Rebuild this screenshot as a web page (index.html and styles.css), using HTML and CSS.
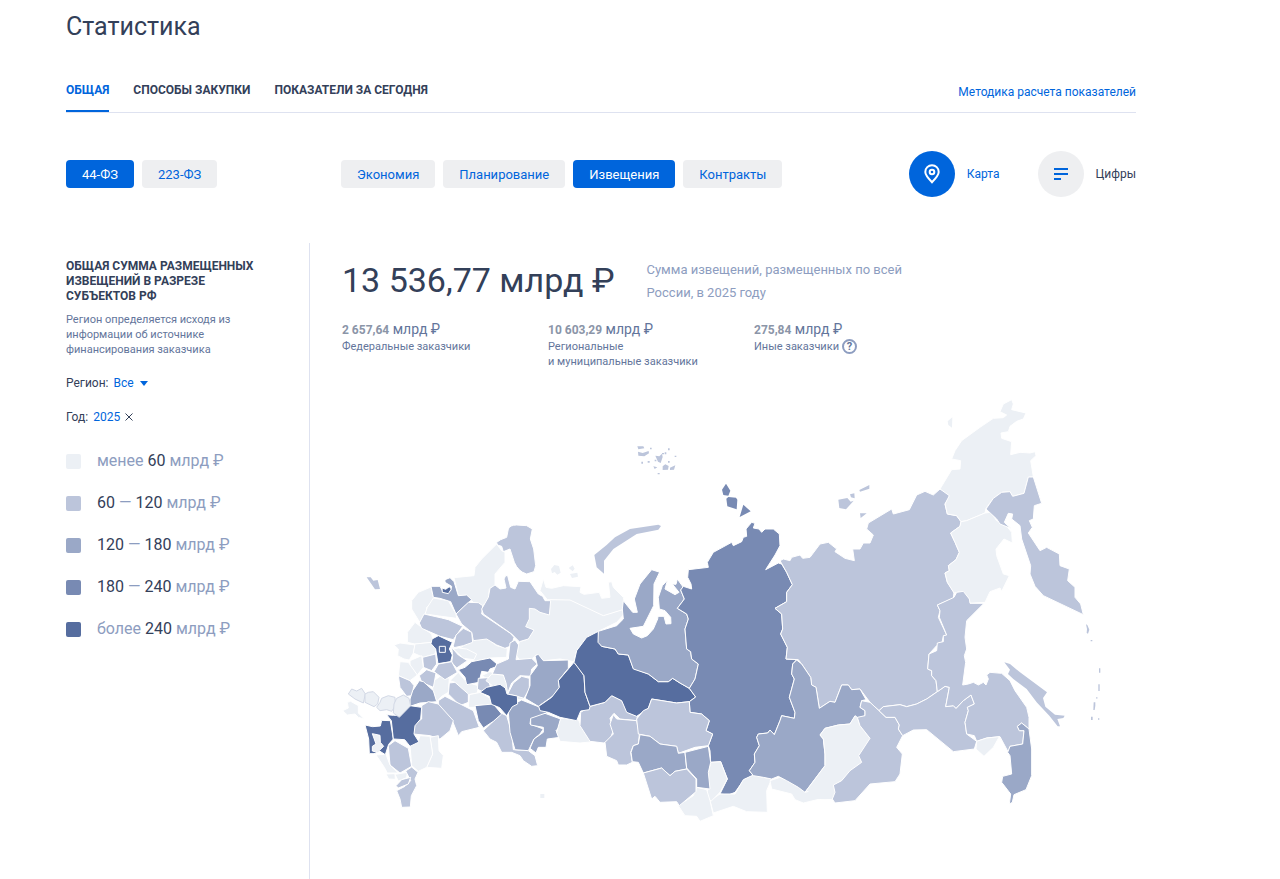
FILE: index.html
```html
<!DOCTYPE html>
<html lang="ru">
<head>
<meta charset="utf-8">
<title>Статистика</title>
<link rel="stylesheet" href="styles.css">
</head>
<body>
<main class="page">
  <h1 class="title">Статистика</h1>
  <div class="tabbar">
    <nav class="tabs">
      <a class="tab tab-active" href="#general">Общая</a>
      <a class="tab" href="#methods">Способы закупки</a>
      <a class="tab" href="#today">Показатели за сегодня</a>
    </nav>
    <a class="method" href="#method">Методика расчета показателей</a>
  </div>

  <div class="filters">
    <div class="pills laws">
      <button class="pill pill-active" type="button">44-ФЗ</button>
      <button class="pill" type="button">223-ФЗ</button>
    </div>
    <div class="pills">
      <button class="pill" type="button">Экономия</button>
      <button class="pill" type="button">Планирование</button>
      <button class="pill pill-active" type="button">Извещения</button>
      <button class="pill" type="button">Контракты</button>
    </div>
    <div class="views">
      <button class="view view-active" type="button">
        <span class="disc"><svg width="16" height="20" viewBox="0 0 16 20" fill="none" stroke="#fff" stroke-width="2"><path d="M8 18.2C4.2 14.2 1.3 11.200 1.300 7.900a6.700 6.700 0 0 1 13.400 0c0 3.300-2.900 6.300-6.700 10.300z"/><circle cx="8" cy="8" r="2.300"/></svg></span>
        Карта
      </button>
      <button class="view" type="button">
        <span class="disc"><svg width="14" height="12" viewBox="0 0 14 12" fill="none" stroke="#0065dc" stroke-width="2"><path d="M0 1h14M0 6h14M0 11h7"/></svg></span>
        Цифры
      </button>
    </div>
  </div>

  <div class="body">
    <aside class="side">
      <h2 class="side-title">Общая сумма размещенных извещений в разрезе субъектов РФ</h2>
      <p class="side-note">Регион определяется исходя из информации об источнике финансирования заказчика</p>
      <div class="field">
        <label for="region">Регион:</label>
        <select id="region" class="region"><option>Все</option></select>
        <svg width="8" height="5" viewBox="0 0 8 5"><path d="M0 0h8L4 5z" fill="#0065dc"/></svg>
      </div>
      <div class="field">
        <span>Год:</span>
        <a class="year" href="#year">2025</a>
        <button class="clear" type="button" aria-label="Сбросить год"><svg width="8" height="8" viewBox="0 0 8 8" stroke="#334059" fill="none"><path d="M.5.5l7 7M7.500.5l-7 7"/></svg></button>
      </div>
      <ul class="legend">
        <li><i class="swatch s1"></i><span>менее <b>60</b> млрд ₽</span></li>
        <li><i class="swatch s2"></i><span><b>60</b> — <b>120</b> млрд ₽</span></li>
        <li><i class="swatch s3"></i><span><b>120</b> — <b>180</b> млрд ₽</span></li>
        <li><i class="swatch s4"></i><span><b>180</b> — <b>240</b> млрд ₽</span></li>
        <li><i class="swatch s5"></i><span>более <b>240</b> млрд ₽</span></li>
      </ul>
    </aside>

    <section class="content">
      <div class="total">
        <div class="total-sum">13 536,77 млрд ₽</div>
        <p class="total-note">Сумма извещений, размещенных по всей России, в 2025 году</p>
      </div>
      <div class="parts">
        <div class="part"><div class="part-sum"><b>2 657,64</b> млрд ₽</div>Федеральные заказчики</div>
        <div class="part"><div class="part-sum"><b>10 603,29</b> млрд ₽</div>Региональные<br>и муниципальные заказчики</div>
        <div class="part"><div class="part-sum"><b>275,84</b> млрд ₽</div><div class="part-row">Иные заказчики <button class="help" type="button">?</button></div></div>
      </div>

      <svg class="map" viewBox="0 0 2292 1296" role="img" aria-label="Карта регионов России">
        <!-- North-west and centre -->
        <g transform="translate(-36 315)">
          <path class="c2 isle" d="M110 235L122 235 130 245 143 243 150 270 135 271z"/>
          <path class="c2" d="M500 130L512 122 530 115 535 90Q540 78 560 78L590 80 607 90 601 120 611 150 617 200 612 218 590 225Q565 218 553 190L540 150 520 158 515 142 502 138z"/>
          <path class="c1" d="M372 236L432 230 435 205 455 180 500 135 515 155 525 160 525 190 495 225 495 260 478 270 475 305 458 320 430 310 410 290 385 290z"/>
          <path class="c1" d="M303 264L310 295 320 298 290 325 290 345 268 368 245 330 245 305 265 280z"/>
          <path class="c1" d="M310 297L355 305 378 345 380 358 335 352 285 345 292 325z"/>
          <path class="c3" d="M303 262L330 262 340 280 362 275 365 262 345 250 345 242 360 236 372 248 385 290 410 288 425 302 400 325 378 345 362 308 330 298 310 295z"/>
          <path class="c5" d="M336 267L347 271 358 263 364 270 355 284 337 280z"/>
          <path class="c1" d="M255 370L275 385 305 405 310 430 255 435 232 430 232 400z"/>
          <path class="c1" d="M385 450L430 422 470 418 500 440 532 448 530 475 480 477 435 487 425 480z"/>
          <path class="c1" d="M370 450L385 447 410 450 440 465 432 482 400 478z"/>
          <path class="c2" d="M378 345L415 310 445 311 458 320 455 345 540 402 552 415 545 440 525 448 500 438 470 420 430 425 425 400 395 375z"/>
          <path class="c2" d="M282 345L335 357 355 362 398 382 370 422 330 412 275 388 268 372z"/>
          <path class="c2" d="M370 440L378 408 400 388 425 400 428 430 400 440 372 446z"/>
          <path class="c2" d="M365 445L385 468 412 485 380 507 365 490 368 470z"/>
          <path class="c1" d="M192 438L210 432 255 438 250 462 238 483 222 480 203 470 205 450z"/>
          <path class="c1" d="M255 435L305 430 318 450 315 465 280 475 250 462z"/>
          <path class="c5" d="M306 420L325 410 367 430 358 450 367 468 362 488 324 494 317 450 303 434z"/>
          <path class="c5" d="M328 442h18v18h-18z"/>
        </g>

        <!-- South and Volga -->
        <g transform="translate(-36 735)">
          <path class="c2" d="M278 55L317 45 320 75 305 95 280 85z"/>
          <path class="c1" d="M240 65L275 50 280 85 262 108 240 85z"/>
          <path class="c1" d="M210 68L235 70 262 108 240 125 205 110z"/>
          <path class="c1" d="M308 128L330 112 358 118 355 160 335 172 320 188 308 150z"/>
          <path class="c2" d="M325 75L365 68 382 100 345 122 312 98z"/>
          <path class="c2" d="M268 110L290 92 318 102 310 145 275 130z"/>
          <path class="c2" d="M205 110L240 125 252 140 245 170 230 172 210 145z"/>
          <path class="c3" d="M240 180L248 155 268 125 280 128 310 155 320 188 270 192 240 202z"/>
          <path class="c1" d="M360 125L385 100 410 130 445 140 442 162 415 167 375 130z"/>
          <path class="c2" d="M358 132L375 130 415 165 415 190 390 200 355 165z"/>
          <path class="c1" d="M455 110L480 98 525 113 528 145 480 145 478 122z"/>
          <path class="c1" d="M418 167L452 160 480 178 490 202 440 205 415 205z"/>
          <path class="c4" d="M385 92L405 85 425 68 480 57 507 80 480 90 475 100 455 97 447 130 410 137 405 115z"/>
          <path class="c2" d="M445 118L475 116 480 140 460 160 442 150z"/>
          <path class="c2" d="M325 185L345 172 430 215 448 265 395 278 385 290 365 240 325 205z"/>
          <path class="c2" d="M275 200L295 188 325 195 370 245 360 275 330 300 300 290 250 285 255 255 275 240z"/>
          <path class="c1" d="M300 295L325 290 327 335 340 350 335 388 290 385 308 345z"/>
          <path class="c1" d="M240 320L265 305 270 290 300 292 308 345 290 385 265 397 245 380z"/>
          <path class="c2" d="M175 320L195 305 235 328 245 382 210 402 180 378z"/>
          <path class="c1" d="M138 348L168 346 180 378 205 402 172 402 163 385z"/>
          <path class="c1" d="M168 405L195 404 196 421 176 420z"/>
          <path class="c1" d="M195 406L232 400 230 416 205 426z"/>
          <path class="c2" d="M227 396L245 384 264 400 255 420 260 440 244 470 241 504 215 505 210 480 200 455 225 442 242 425z"/>
          <path class="c2" d="M198 440L215 422 242 415 235 435 205 447z"/>
          <path class="c5" d="M105 258L128 263 151 261 155 244 181 245 190 300 176 316 166 347 150 337 132 344 118 344 116 300z"/>
          <path class="c1" d="M127 284L150 289 151 310 161 322 142 340 127 336 127 322 138 315z"/>
          <path class="c5" d="M170 227L190 229 212 229 240 200 275 205 272 240 255 260 252 285 267 309 240 322 224 302 190 300 184 245z"/>
          <path class="c1" d="M38 215L55 207 52 190 62 187 85 200 85 222 103 240 85 235 75 225 52 228z"/>
          <g class="annex">
            <path d="M55 165L65 150 80 156 95 148 106 165 100 192 75 180z"/>
            <path d="M105 165L115 160 130 158 147 175 143 195 132 203 105 190z"/>
            <path d="M140 205L150 190 155 178 175 170 195 175 196 200 185 217 170 212 150 215z"/>
            <path d="M192 195L200 178 220 168 237 178 242 200 208 235 190 222z"/>
          </g>
        </g>

        <!-- Urals and the north -->
        <g transform="translate(354 555)">
          <path class="c1" d="M250 0L258 25 275 28 310 20 363 23 360 40 372 46 418 40 425 58 450 55 445 10 455 8 460 25 490 55 497 90 430 112 380 92 330 65 262 62 240 35z"/>
          <path class="c1" d="M268 62L330 63 430 110 495 90 490 108 470 130 415 157 380 175 350 215 342 248 300 240 250 245 230 228 215 240 178 242 168 228 178 188 205 180 195 145 200 88z"/>
          <path class="c2" d="M90 28L105 18 120 30 138 27 132 0 137 -10 143 -10 152 25 165 30 175 7 210 8 235 45 248 52 255 65 272 65 268 108 240 100 225 90 208 88 208 120 197 143 222 153 205 180 178 188 155 165 70 105 65 90 85 55z"/>
          <path class="c1" d="M78 305L95 285 130 288 145 320 145 350 190 350 190 362 150 362z"/>
          <path class="c2" d="M148 210L150 192 165 183 176 198 168 242 215 238 232 255 215 270 212 292 180 290 155 312 143 342 138 312 130 288 97 285 110 255 145 240z"/>
          <path class="c2" d="M143 345L160 312 185 292 208 298 208 330 192 358 172 352z"/>
          <path class="c3" d="M225 230L235 226 250 245 325 243 325 268 295 305 298 325 280 350 235 382 195 358 210 320 210 290 232 260z"/>
          <path class="c2" d="M70 455L125 403 140 410 155 460 160 512 205 515 225 530 233 560 215 562 190 545 180 530 155 520 125 520 110 490 90 480z"/>
          <path class="c3" d="M145 400L155 378 185 363 240 385 262 402 250 420 212 420 210 435 250 450 240 465 222 480 205 515 165 512 150 460z"/>
          <path class="c4" d="M45 380L100 375 125 405 100 427 70 447 55 425z"/>
          <path class="c5" d="M60 340L80 325 120 316 136 327 141 345 172 351 173 375 157 383 140 410 119 386 94 376 88 352z"/>
          <path class="c3" d="M212 418L255 403 302 420 302 440 288 455 300 475 262 480 258 505 235 505 228 522 210 508 222 480 250 460 250 445 212 438z"/>
          <path class="c1" d="M302 418L355 422 365 442 400 488 360 492 300 487 290 460z"/>
          <path class="c2" d="M390 382L435 370 455 350 485 365 505 400 532 412 530 425 480 420 462 403 450 418 460 455 450 480 432 492 390 487 360 440 362 400z"/>
          <path class="c5" d="M342 250L355 265 372 290 375 340 390 382 388 392 362 396 350 425 300 415 265 400 240 395 236 382 275 355 298 325 295 305 325 270z"/>
          <path class="c5" d="M415 157L418 190 425 202 465 210 475 225 505 228 520 268 565 285 595 308 625 308 638 298 660 312 688 328 707 354 688 368 650 372 575 360 565 388 530 412 500 400 485 365 455 350 435 370 390 382 375 340 372 290 342 250 350 215 380 175z"/>
        </g>

        <!-- Yamal, Krasnoyarsk and the Arctic islands -->
        <g transform="translate(744 105)">
          <path class="c2 isle" d="M13 378L50 348 75 325 120 300 205 287 213 291 205 302 140 315 70 360 42 395 42 434 20 415z"/>
          <path class="c2 isle" d="M142 52h18l3 6-18 3zM144 68l14 4 18-6 1 7-14 9-18-2zM180 56h5v5h-5zM154 98h5v6h-5zM173 96h6v5h-6zM194 92h5v5h-5zM196 80l12 2 8-8 2 10-6 18-8-4zM216 72h6v4h-6zM224 70h5v6h-5zM234 58h5v6h-5zM254 80h5v4h-5zM234 96h5v5h-5zM190 112l12 3-8 5zM218 112l8-6 10 5-2 11-16 1zM240 116l16-7-4 13-12 1zM203 132h6v4h-6z"/>
          <path class="c4 isle" d="M408 164L421 185 415 200 400 198 396 182zM409 209L415 204 438 206 442 212 440 241 412 232zM460 227L482 247 449 264z"/>
          <path class="c3" d="M25 607L80 590 100 570 97 540 100 515 128 550 142 550 133 510 150 465 185 422 210 430 214 455 232 455 225 480 255 497 267 490 247 465 258 466 262 450 280 475 272 483 283 510 262 538 290 555 295 570 285 600 290 660 302 668 305 690 325 705 315 750 298 778 270 762 248 748 235 758 205 758 175 735 130 720 115 678 85 675 75 660 35 652 24 640z"/>
          <path class="water" d="M211 425L192 465 191 530 160 592 120 598 130 615 155 627 172 620 190 600 203 570 204 562 222 562 228 585 243 584 242 565 225 545 208 540 205 505 217 470 234 452z"/>
          <path class="c4" d="M295 422L355 415 352 400 370 370 425 340 430 350 455 338 460 325 470 322 468 300 485 280 495 283 490 297 507 300 515 310 525 300 550 300 568 315 570 350 555 378 527 422 565 402 575 405 590 430 607 467 590 490 590 518 555 538 575 555 578 600 572 615 592 655 588 690 620 692 608 705 605 735 613 750 598 805 615 850 613 868 575 860 570 875 553 917 540 903 533 912 505 915 500 925 508 950 493 975 495 1000 478 1025 490 1040 462 1052 435 1090 415 1098 390 1095 412 1050 392 998 362 1000 360 965 355 950 368 915 348 905 358 875 335 855 300 850 298 818 317 804 298 778 315 750 325 705 305 690 302 668 290 660 285 600 295 570 290 555 262 538 283 510 272 483 280 472 305 480 303 465 293 445z"/>
        </g>

        <!-- Southern Siberia -->
        <g transform="translate(774 675)">
          <path class="c1" d="M430 482L460 468 515 480 500 515 502 580 440 578 400 562 340 582 330 545 360 525 405 525z"/>
          <path class="c1" d="M332 430L362 428 382 480 360 520 335 545 310 540 325 510 325 460z"/>
          <path class="c1" d="M290 505L320 512 330 545 340 590 300 607 290 592 255 590 235 560 280 530z"/>
          <path class="c2" d="M40 287L50 300 110 305 118 347 115 375 100 380 92 400 97 430 80 438 55 438 50 425 20 412 15 370 40 345 30 315z"/>
          <path class="c2" d="M155 240L230 252 268 248 270 280 305 285 328 305 318 335 338 345 325 380 285 385 235 403 230 382 180 375 150 352 115 345 110 300 130 275 145 268z"/>
          <path class="c3" d="M120 347L150 352 180 375 230 382 235 403 255 400 260 450 225 457 210 470 185 447 130 462 115 430 97 428 93 400 100 380 115 375z"/>
          <path class="c3" d="M255 400L325 382 332 430 325 460 330 510 290 505 290 480 260 447z"/>
          <path class="c2" d="M130 462L185 447 210 470 225 457 260 450 288 480 288 518 238 560 230 548 180 550 165 532 155 540z"/>
        </g>

        <!-- Yakutia and the north-east -->
        <g transform="translate(1434 -15)">
          <path class="c2" d="M-120 515L-110 510-90 515-85 505-60 498-52 508-30 505 0 465 25 460 50 480 45 488 75 508 103 515 98 480 120 480 130 462 150 462 160 438 140 420 145 402 215 360 220 375 268 362 290 318 315 307 340 318 360 300 388 312 388 325 375 345 382 375 410 380 423 398 420 412 392 432 405 460 418 490 408 512 385 530 388 545 375 552 382 580 402 610 400 628 352 648 360 665 355 685 380 738 370 742 365 765 350 770 327 795 323 840 335 845 335 860 348 875 352 908 320 930 290 945 260 953 240 947 190 953 177 965 150 940 120 900 95 902 85 888 65 888 45 940 30 937-2 958-12 895-25 888-28 865-55 825-65 812-102 810-98 775-118 735-112 720-115 675-135 658-100 638-100 610-83 587-100 550z"/>
          <path class="c2 isle" d="M55 332L82 327 92 338 101 335 78 361 58 357zM90 316L103 313 104 328 93 325zM118 303L148 288 148 299 120 308zM120 373L140 373 122 387z"/>
          <path class="c1 isle" d="M383 97L397 85 396 116 385 108z"/>
          <path class="c1" d="M360 300L395 242 420 240 422 215 395 210 405 185 425 155 480 115 520 88 550 86 560 78 540 68 550 45 575 32 580 45 575 62 618 72 610 90 590 97 570 112 565 128 543 132 545 148 575 158 572 197 600 190 630 192 645 188 648 200 632 215 640 264 625 265 612 313 578 322 570 308 545 310 520 328 498 358 495 372 440 395 423 398 410 380 382 375 375 345 388 320z"/>
          <path class="c1" d="M423 398L440 395 495 372 512 370 530 395 555 405 575 430 577 462 552 450 528 480 530 500 550 555 568 560 545 607 540 597 510 608 495 640 450 643 445 625 425 608 402 612 382 580 375 552 388 545 385 530 408 512 418 490 405 460 392 432 420 412z"/>
          <path class="c2" d="M625 264L640 264 665 343 643 350 640 390 628 395 637 415 625 432 660 485 680 475 718 495 720 530 748 540 743 575 765 595 765 625 782 645 790 677 670 620 645 592 630 555 632 530 605 450 600 410 575 390 578 375 565 373 553 400 572 418 540 405 530 390 498 360 520 328 545 310 570 308 578 322 612 313z"/>
        </g>

        <!-- Kuril islands -->
        <path class="c2 isle" transform="translate(2064 615)" d="M168 76L172 78 178 92 174 104 170 102 171 90zM182 123h5v4h-5zM207 208h4v13h-4zM205 256h4v20h-4zM199 294h3v5h-3zM191 310h5v10l-2 13h-4zM183 353h5v10h-5zM204 358h4v4h-4z"/>

        <!-- Baikal and the Far East -->
        <g transform="translate(1314 735)">
          <path class="c1" d="M232 235L240 260 270 298 240 350 245 370 185 425 160 438 165 460 157 482 120 480 70 492 45 482 35 465-25 450-30 425 0 415 55 440z"/>
          <path class="c3" d="M50 63L38 75 35 105 43 120 28 175 45 220 43 238 5 230 0 245-17 287-30 273-37 282-65 285-70 295-62 320-77 345-75 370-92 395-80 410-50 415-25 420-5 412 20 425 55 445 75 460 135 380 135 345 130 300 120 288 135 268 175 258 210 255 225 232 235 240 255 230 255 215 240 205 245 185 258 182 240 150 215 152 205 138 185 138 165 190 150 187 118 208 108 145 95 138 92 115 65 75z"/>
          <path class="c1" d="M225 230L232 235 240 260 270 298 240 350 245 370 185 425 160 438 75 460 135 380 135 345 130 300 120 288 135 268 175 258 210 255z"/>
          <path class="c1 isle" d="M84 452L150 432 185 427 162 440 165 460 157 480 90 480z"/>
          <path class="c2" d="M245 185L270 190 297 215 318 235 345 235 358 258 355 270 368 290 350 325 367 345 360 405 345 428 270 435 225 485 165 492 157 480 165 460 160 438 185 425 210 395 245 370 236 350 270 298 240 260 232 235 255 230 255 215 240 205z"/>
          <path class="c2" d="M297 215L310 203 360 197 380 203 410 195 440 180 472 158 495 142 508 145 497 203 520 200 528 208 550 185 573 168 583 195 562 205 565 215 555 250 560 285 590 307 583 330 520 338 440 272 400 273 368 290 355 270 358 258 345 235 318 235z"/>
          <path class="c2" d="M522-125L530-140 550-143 568-120 570-107 612-107 560-55 555-5 560 30 553 50 557 70 548 138 565 135 580 130 595 138 610 130 618 138 625 120 620 108 630 100 665 103 690 125 705 155 740 205 747 235 747 270 725 252 712 262 718 275 732 275 728 315 690 322 685 340 660 293 620 297 590 307 583 290 560 285 555 250 565 215 562 205 583 195 573 168 550 185 528 208 520 200 497 203 508 145 495 142 472 158 468 125 455 110 455 95 443 90 447 45 470 35 472 12 490 8 490-10 500-12 478-65 480-85 472-102z"/>
          <path class="c1" d="M590 307L620 297 658 293 640 325 612 352 588 330z"/>
          <path class="c3" d="M747 270L755 330 755 410 738 452 702 467 697 490 688 495 692 465 665 430 668 412 695 405 690 350 683 340 690 322 728 315 732 275 718 275 712 262 725 252z"/>
          <path class="c2 isle" d="M673 70L690 75 720 100 801 160 789 177 796 203 825 227 854 230 850 237 832 240 840 262 833 262 808 230 770 190 740 150 700 120 684 105 690 92z"/>
        </g>
        <path class="c1 isle" d="M595 1200h12v12h-12z"/>
        <path class="c1 isle" d="M627 525l10-12 14 3 5 20-10 6-8-8-8 4zM680 522l12-8 6 10-6 8zM684 540l22-4 2 12-18 4z"/>
      </svg>
    </section>
  </div>
</main>
</body>
</html>
```
FILE: styles.css
```css
* { box-sizing: border-box; }
body { margin: 0; background: #fff; color: #334059; font: 12px/15px Roboto, "Liberation Sans", sans-serif; }
h1, h2, p, ul { margin: 0; padding: 0; font-weight: 400; }
a { color: #0065dc; text-decoration: none; }
button, select { font: inherit; color: inherit; border: 0; padding: 0; background: none; cursor: pointer; }
svg { display: block; }

.page { margin: 0 144px 0 66px; padding-top: 11px; }
.title { font-size: 25px; line-height: 32px; }

.tabbar { display: flex; justify-content: space-between; margin-top: 32px; height: 38px; border-bottom: 1px solid #dee2f0; }
.tabs { display: flex; gap: 24px; }
.tab { padding-top: 8px; height: 37px; color: #334059; font-size: 12px; font-weight: 700; text-transform: uppercase; border-bottom: 2px solid transparent; }
.tab-active { color: #0065dc; border-color: #0065dc; }
.method { padding-top: 10px; }

.filters { display: flex; align-items: center; margin-top: 38px; }
.laws { width: 275px; }
.pills { display: flex; gap: 8px; }
.pill { height: 28px; padding: 0 16px; border-radius: 4px; background: #eeeff1; color: #0065dc; font-size: 13px; }
.pill-active { background: #0065dc; color: #fff; }
.views { display: flex; gap: 38px; margin-left: auto; }
.view { display: flex; align-items: center; gap: 12px; }
.view-active { color: #0065dc; }
.disc { display: grid; place-items: center; width: 46px; height: 46px; border-radius: 50%; background: #eeeff1; }
.view-active .disc { background: #0065dc; }

.body { display: flex; margin-top: 46px; min-height: calc(100vh - 243px); }
.side { flex: none; width: 244px; padding: 16px 32px 0 0; border-right: 1px solid #dee2f0; }
.side-title { font-size: 12px; font-weight: 700; text-transform: uppercase; }
.side-note { margin-top: 8px; padding-right: 32px; color: #63759b; font-size: 11px; }
.field { display: flex; align-items: center; gap: 5px; margin-top: 18px; line-height: 16px; }
.region { appearance: none; color: #0065dc; }
.clear { line-height: 0; }
.legend { display: grid; gap: 22px; margin-top: 26px; list-style: none; color: #8d9dc0; font-size: 16px; line-height: 20px; }
.legend li { display: flex; align-items: center; gap: 16px; }
.legend b { color: #334059; font-weight: 400; }
.swatch { width: 15px; height: 15px; border-radius: 2px; }
.s1 { background: #ecf0f5; }
.s2 { background: #bcc5db; }
.s3 { background: #9aa8c7; }
.s4 { background: #788ab3; }
.s5 { background: #566d9f; }

.content { flex: 1; padding: 15px 30px 0 32px; }
.total { display: flex; gap: 32px; }
.total-sum { font-size: 34px; line-height: 44px; white-space: nowrap; }
.total-note { max-width: 280px; color: #8d9dc0; font-size: 13px; line-height: 23px; }
.parts { display: grid; grid-template-columns: 206px 206px 1fr; margin-top: 17px; color: #63759b; font-size: 11px; }
.part-sum { margin-bottom: 1px; font-size: 14px; line-height: 16px; }
.part-sum b { color: #8b95a8; font-size: 12px; font-weight: 700; }
.part-row { display: flex; gap: 3px; }
.help { width: 15px; height: 15px; border: 2px solid #8d9dc0; border-radius: 50%; color: #63759b; font-size: 11px; font-weight: 700; line-height: 11px; }

.map { width: 100%; height: auto; margin-top: 25px; stroke: #fff; stroke-width: 3; stroke-linejoin: round; overflow: visible; }
.isle { stroke: none; }
.c1 { fill: #ecf0f5; }
.c2 { fill: #bcc5db; }
.c3 { fill: #9aa8c7; }
.c4 { fill: #788ab3; }
.c5 { fill: #566d9f; }
.water { fill: #fff; }
.annex { fill: #ecf0f5; stroke: #d3d9e6; }
```
